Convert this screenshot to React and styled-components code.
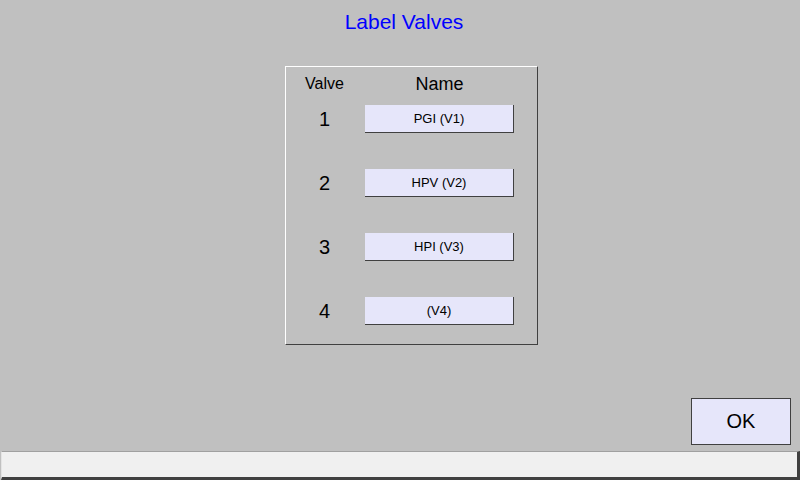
import React from "react";
import styled, { createGlobalStyle } from "styled-components";

const Global = createGlobalStyle`
  html, body { margin: 0; padding: 0; background: #c0c0c0; }
  body { font-family: "Liberation Sans", Arial, sans-serif; }
  * { box-sizing: border-box; }
`;

const Page = styled.div`
  width: 800px;
  height: 480px;
  display: flex;
  flex-direction: column;
  background: #c0c0c0;
  overflow: hidden;
`;

const Title = styled.h1`
  margin: 10px 0 0 8px;
  font-size: 21px;
  line-height: 24px;
  font-weight: normal;
  color: #0000ff;
  text-align: center;
`;

const Panel = styled.div`
  align-self: flex-start;
  margin: 32px 0 0 285px;
  width: 253px;
  padding: 2px 23px 19px 0;
  border-top: 1px solid #ffffff;
  border-left: 1px solid #ffffff;
  border-right: 1px solid #404040;
  border-bottom: 1px solid #404040;
  display: flex;
  flex-direction: column;
`;

const Grid = styled.div`
  display: grid;
  grid-template-columns: 77px 149px;
  column-gap: 2px;
  grid-auto-rows: ${(p) => p.$rowHeight}px;
  row-gap: ${(p) => p.$gap}px;
  margin-top: ${(p) => p.$top || 0}px;
  align-items: center;
`;

const Head = styled.div`
  text-align: center;
  font-size: ${(p) => p.$size}px;
  color: #000;
`;

const Num = styled.div`
  text-align: center;
  font-size: 20px;
  color: #000;
`;

const NameField = styled.div`
  height: 28px;
  display: flex;
  align-items: center;
  justify-content: center;
  background: #e6e6fa;
  border-right: 1px solid #404040;
  border-bottom: 1px solid #404040;
  font-size: 13px;
  color: #000;
`;

const Spacer = styled.div`
  flex: 1;
`;

const OkButton = styled.button`
  align-self: flex-end;
  margin: 0 9px 6px 0;
  width: 100px;
  height: 47px;
  background: #e6e6fa;
  border: 1px solid #404040;
  font-family: "Liberation Sans", Arial, sans-serif;
  font-size: 20px;
  color: #000;
  padding: 0;
`;

const StatusBar = styled.div`
  margin-left: 1px;
  height: 29px;
  background: #f0f0f0;
  border-top: 1px solid #a0a0a0;
  border-left: 1px solid #e4e4e4;
  border-right: 3px solid #404040;
  border-bottom: 3px solid #404040;
`;

const valves = [
  { n: 1, name: "PGI (V1)" },
  { n: 2, name: "HPV (V2)" },
  { n: 3, name: "HPI (V3)" },
  { n: 4, name: "(V4)" },
];

export default function App() {
  return (
    <Page>
      <Global />
      <Title>Label Valves</Title>
      <Panel>
        <Grid $rowHeight={30} $gap={0}>
          <Head $size={16}>Valve</Head>
          <Head $size={18}>Name</Head>
        </Grid>
        <Grid $rowHeight={28} $gap={36} $top={6}>
          {valves.map((v) => (
            <React.Fragment key={v.n}>
              <Num>{v.n}</Num>
              <NameField>{v.name}</NameField>
            </React.Fragment>
          ))}
        </Grid>
      </Panel>
      <Spacer />
      <OkButton>OK</OkButton>
      <StatusBar />
    </Page>
  );
}
